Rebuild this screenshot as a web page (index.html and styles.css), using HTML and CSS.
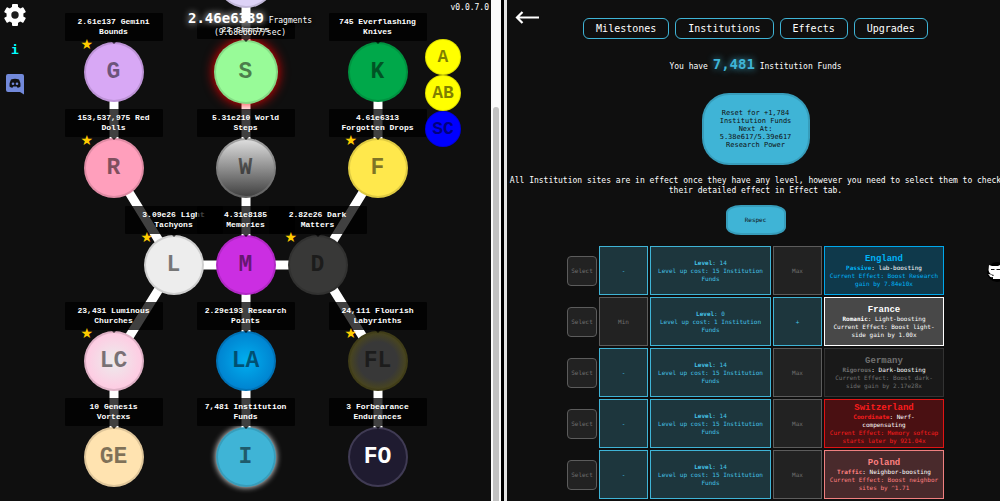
FILE: index.html
```html
<!DOCTYPE html>
<html lang="en">
<head>
<meta charset="utf-8">
<title>Institution Funds</title>
<link rel="stylesheet" href="styles.css">
</head>
<body>
<main class="app">
  <section class="tree-pane">
    <div class="tree">
      <svg class="links" width="1" height="1" aria-hidden="true">
        <path d="M-132 72V168L-72 265L-132 361V457M0 -22V457M132 72V168L72 265L132 361V457M-72 265H72"/>
      </svg>
      <button class="node c3 r0 o"></button>
      <button class="node c1 r1 g">G<span class="tip">2.61e137 Gemini<br>Bounds</span><i class="star">★</i></button>
      <button class="node c3 r1 s">S<span class="tip">22 Stories</span></button>
      <button class="node c5 r1 k">K<span class="tip">745 Everflashing<br>Knives</span></button>
      <button class="node c1 r2 r">R<span class="tip">153,537,975 Red<br>Dolls</span><i class="star">★</i></button>
      <button class="node c3 r2 w">W<span class="tip">5.31e210 World<br>Steps</span></button>
      <button class="node c5 r2 f">F<span class="tip">4.61e6313<br>Forgotten Drops</span><i class="star">★</i></button>
      <button class="node c2 r3 l">L<span class="tip">3.09e26 Light<br>Tachyons</span><i class="star">★</i></button>
      <button class="node c3 r3 m">M<span class="tip">4.31e8185<br>Memories</span></button>
      <button class="node c4 r3 d">D<span class="tip">2.82e26 Dark<br>Matters</span><i class="star">★</i></button>
      <button class="node c1 r4 lc">LC<span class="tip">23,431 Luminous<br>Churches</span><i class="star">★</i></button>
      <button class="node c3 r4 la">LA<span class="tip">2.29e193 Research<br>Points</span></button>
      <button class="node c5 r4 fl">FL<span class="tip">24,111 Flourish<br>Labyrinths</span><i class="star">★</i></button>
      <button class="node c1 r5 ge">GE<span class="tip">10 Genesis<br>Vortexs</span></button>
      <button class="node c3 r5 i">I<span class="tip">7,481 Institution<br>Funds</span></button>
      <button class="node c5 r5 fo">FO<span class="tip">3 Forbearance<br>Endurances</span></button>
    </div>
    <nav class="tools">
      <button class="tool" aria-label="Settings">
        <svg width="22" height="22" viewBox="-11 -11 22 22"><g fill="#fff"><circle r="8.5"/><rect x="-3" y="-11" width="6" height="22" rx="1"/><rect x="-3" y="-11" width="6" height="22" rx="1" transform="rotate(60)"/><rect x="-3" y="-11" width="6" height="22" rx="1" transform="rotate(120)"/></g><circle r="3.7" fill="#1c1c1c"/></svg>
      </button>
      <button class="tool info">i</button>
      <button class="tool" aria-label="Discord">
        <svg width="18" height="21" viewBox="0 0 18 21"><path fill="#7289da" d="M2 0H16Q18 0 18 2V20.500L14 18H2Q0 18 0 16V2Q0 0 2 0Z"/><path fill="#111" d="M5 5.500Q9 4 13 5.500Q15 9 14.500 12.500Q13 13.800 11.500 13.800L10.800 12.600H7.200L6.500 13.800Q5 13.800 3.500 12.500Q3 9 5 5.500Z"/><circle cx="7" cy="9.800" r="1.300" fill="#7289da"/><circle cx="11" cy="9.800" r="1.300" fill="#7289da"/></svg>
      </button>
    </nav>
    <nav class="side">
      <button class="small">A</button>
      <button class="small">AB</button>
      <button class="small sc">SC</button>
    </nav>
    <span class="version">v0.0.7.0</span>
  </section>
  <div class="scrollbar"><div class="thumb"></div></div>
  <div class="divider"></div>
  <section class="detail">
    <button class="back" aria-label="Back"><svg width="24" height="13" viewBox="0 0 24 13"><path d="M24 6.500H2M7.500 1L2 6.500L7.500 12" fill="none" stroke="#fff" stroke-width="2.200"/></svg></button>
    <nav class="tabs">
      <button class="tab">Milestones</button>
      <button class="tab">Institutions</button>
      <button class="tab">Effects</button>
      <button class="tab">Upgrades</button>
    </nav>
    <p class="have">You have <strong>7,481</strong> Institution Funds</p>
    <button class="reset">Reset for +1,784<br>Institution Funds<br>Next At:<br>5.38e617/5.39e617<br>Research Power</button>
    <p class="note">All Institution sites are in effect once they have any level, however you need to select them to check<br>their detailed effect in Effect tab.</p>
    <button class="respec">Respec</button>
    <div class="sites">
      <div class="site">
        <button class="select">Select</button><button class="cell step">-</button>
        <div class="cell level"><p><b>Level</b>: 14</p><p>Level up cost: 15 Institution</p><p>Funds</p></div>
        <button class="cell step locked">Max</button>
        <div class="cell name england"><h3>England</h3><p><b>Passive</b><em>: lab-boosting</em></p><p>Current Effect: Boost Research</p><p>gain by 7.84e10x</p></div>
      </div>
      <div class="site">
        <button class="select">Select</button><button class="cell step locked">Min</button>
        <div class="cell level"><p><b>Level</b>: 0</p><p>Level up cost: 1 Institution</p><p>Funds</p></div>
        <button class="cell step">+</button>
        <div class="cell name france"><h3>France</h3><p><b>Romanic</b><em>: Light-boosting</em></p><p>Current Effect: Boost light-</p><p>side gain by 1.00x</p></div>
      </div>
      <div class="site">
        <button class="select">Select</button><button class="cell step">-</button>
        <div class="cell level"><p><b>Level</b>: 14</p><p>Level up cost: 15 Institution</p><p>Funds</p></div>
        <button class="cell step locked">Max</button>
        <div class="cell name germany"><h3>Germany</h3><p><b>Rigorous</b><em>: Dark-boosting</em></p><p>Current Effect: Boost dark-</p><p>side gain by 2.17e28x</p></div>
      </div>
      <div class="site">
        <button class="select">Select</button><button class="cell step">-</button>
        <div class="cell level"><p><b>Level</b>: 14</p><p>Level up cost: 15 Institution</p><p>Funds</p></div>
        <button class="cell step locked">Max</button>
        <div class="cell name switzerland"><h3>Switzerland</h3><p><b>Coordinate</b><em>: Nerf-<br>compensating</em></p><p>Current Effect: Memory softcap</p><p>starts later by 921.04x</p></div>
      </div>
      <div class="site">
        <button class="select">Select</button><button class="cell step">-</button>
        <div class="cell level"><p><b>Level</b>: 14</p><p>Level up cost: 15 Institution</p><p>Funds</p></div>
        <button class="cell step locked">Max</button>
        <div class="cell name poland"><h3>Poland</h3><p><b>Traffic</b><em>: Neighbor-boosting</em></p><p>Current Effect: Boost neighbor</p><p>sites by ^1.71</p></div>
      </div>
    </div>
    <a class="github" href="#" aria-label="GitHub"><svg width="13" height="20" viewBox="0 0 13 20"><circle cx="10" cy="10" r="10" fill="#000"/><path fill="#fff" d="M2 3L5 4H11L13 3V17H6V15Q3 16 2 13L1 12L4 12.500L6 14L7 13Q2 12.500 1.500 8Z"/><path d="M4 7.500H7.500M9.500 7.500H13" stroke="#111" stroke-width="1"/></svg></a>
  </section>
  <header class="points">
    <p><strong>2.46e6339</strong> Fragments</p>
    <p>(9.68e6667/sec)</p>
  </header>
</main>
</body>
</html>
```
FILE: styles.css
```css
* { box-sizing: border-box; margin: 0; padding: 0; }
body { background: #0f0f0f; color: #fff; font: 8px/10px "DejaVu Sans Mono", monospace; }
button { font: inherit; color: inherit; background: none; border: 0; }
.app { display: flex; position: relative; height: 100vh; overflow: hidden; }

.tree-pane { position: relative; flex: 491 1 0; min-width: 0; overflow: hidden; }
.scrollbar { width: 10px; background: #fafafa; padding: 107px 2px 0 2px; }
.thumb { height: 100%; border-radius: 3px 3px 0 0; background: #c1c1c1; }
.divider { width: 6px; background: #e4e4e4; border-left: 3px solid #000; }

.tree { position: absolute; top: 0; left: 50%; }
.links { position: absolute; left: 0; top: 0; overflow: visible; }
.links path { fill: none; stroke: #fff; stroke-width: 9; }
.node {
  position: absolute; width: 60px; height: 60px; margin: -30px 0 0 -30px;
  border: 2px solid rgba(0, 0, 0, .125); border-radius: 50%;
  color: rgba(0, 0, 0, .5);
  font: bold 23px/24px "Liberation Mono", monospace;
}
.c1 { left: -132px; } .c2 { left: -72px; } .c3 { left: 0; } .c4 { left: 72px; } .c5 { left: 132px; }
.r0 { top: -22px; } .r1 { top: 72px; } .r2 { top: 168px; } .r3 { top: 265px; } .r4 { top: 361px; } .r5 { top: 457px; }
.o { background: #ddd2f7; }
.g { background: #d8a8f5; }
.s { background: #98fb98; width: 64px; height: 64px; margin: -32px 0 0 -32px; box-shadow: 0 0 12px #f00; }
.k { background: #00a84a; }
.r { background: #ff9fbc; }
.w { background: linear-gradient(#e2e2e2, #3c3c3c) border-box; border-color: rgba(120, 120, 120, .6); }
.f { background: #ffe84c; }
.l { background: #ededed; }
.m { background: #cb2ee2; }
.d { background: #383837; }
.lc { background: radial-gradient(#ececec, #ffcae2 70%) border-box; }
.la { background: radial-gradient(#00aeef, #0082cf 70%) border-box; }
.fl { background: radial-gradient(#383838 45%, #4a461c 68%) border-box; }
.ge { background: #ffe3b0; }
.i { background: #3fb4d6; box-shadow: 0 0 6px #fff; }
.fo { background: #1f1b30; border-color: #403b54; color: #fff; }

.tip {
  position: absolute; left: 50%; bottom: 100%; width: 98px; margin: 0 0 3px -49px; padding: 4px 0;
  background: rgba(0, 0, 0, .75); border-radius: 1px; color: #fff;
  font: bold 8px/10px "Liberation Mono", monospace;
}
.tip::after {
  content: ""; position: absolute; left: 46px; top: 100%;
  border: 3px solid transparent; border-top-color: rgba(0, 0, 0, .75);
}
.star { position: absolute; left: -5px; top: -6px; color: #ffcc00; font: normal 14px/12px "DejaVu Sans", sans-serif; }

.tools { position: absolute; left: 4px; top: 4px; display: flex; flex-direction: column; align-items: flex-start; gap: 17px; }
.tool { width: 22px; display: flex; justify-content: center; }
.info { color: #00ffff; font: bold 13px/14px "DejaVu Sans Mono", monospace; }
.side { position: absolute; right: 30px; top: 39px; display: flex; flex-direction: column; }
.small {
  width: 36px; height: 36px; border: 1px solid rgba(0, 0, 0, .125); border-radius: 50%;
  background: #ff0; color: rgba(0, 0, 0, .5); font: bold 18px/20px "Liberation Mono", monospace;
}
.sc { background: #00f; }
.version { position: absolute; right: 2px; top: 3px; }
.points { position: absolute; left: 0; top: 11px; width: 50%; text-align: center; text-shadow: 0 0 4px #000; pointer-events: none; }
.points p:first-child { line-height: 14px; }
.points strong { font-size: 14px; text-shadow: 0 0 7px #fff; }

.detail { position: relative; flex: 489 1 0; min-width: 0; overflow: hidden; padding: 18px 0 0 4px; display: flex; flex-direction: column; align-items: center; }
.back { position: absolute; left: 8px; top: 11px; height: 13px; }
.tabs { display: flex; gap: 6px; }
.tab { height: 21px; padding: 0 12px; border: 1px solid #3fb4d6; border-radius: 6px; font-size: 10px; }
.have { margin-top: 16px; line-height: 18px; }
.have strong { color: #3fb4d6; font: bold 14px/18px "DejaVu Sans Mono", monospace; text-shadow: 0 0 7px #3fb4d6; }
.reset, .respec {
  flex: none; border: 2px solid rgba(0, 0, 0, .125); background: #3fb4d6; color: #0f0f0f;
}
.reset { margin-top: 17px; width: 108px; height: 72px; border-radius: 27px; font-size: 7px; line-height: 8px; }
.note { margin-top: 11px; text-align: center; white-space: nowrap; }
.respec { margin-top: 9px; width: 60px; height: 30px; border-radius: 15px / 8px; font-size: 6px; }
.sites { margin-top: 11px; display: flex; flex-direction: column; gap: 2px; }
.site { display: flex; align-items: center; gap: 2px; font-size: 6px; line-height: 8px; }
.select { width: 30px; height: 30px; border: 1px solid #5c5c5c; border-radius: 4px; background: #222; color: #707070; }
.cell {
  height: 49px; border: 1px solid #3fb4d6; background: #1d363d; color: #45c2e6;
  display: flex; flex-direction: column; align-items: center; justify-content: center; text-align: center;
}
.step { width: 49px; }
.level { width: 121px; }
.locked { border-color: #5c5c5c; background: #222; color: #707070; }
.name { width: 120px; }
.name h3 { font: bold 9px/10px "Liberation Mono", monospace; }
.name em { font-style: normal; color: #fff; }
.england { border-color: #00a8ec; background: #0f394b; color: #00b4f8; }
.france { border-color: #fff; background: #484848; color: #fff; }
.germany { border-color: #333; background: #191919; color: #707070; }
.switzerland { border-color: #e01414; background: #4a1012; color: #fc1c1c; }
.poland { border-color: #f08080; background: #492a2c; color: #ff8080; }
.github { position: absolute; right: 0; top: 262px; height: 20px; }
```
